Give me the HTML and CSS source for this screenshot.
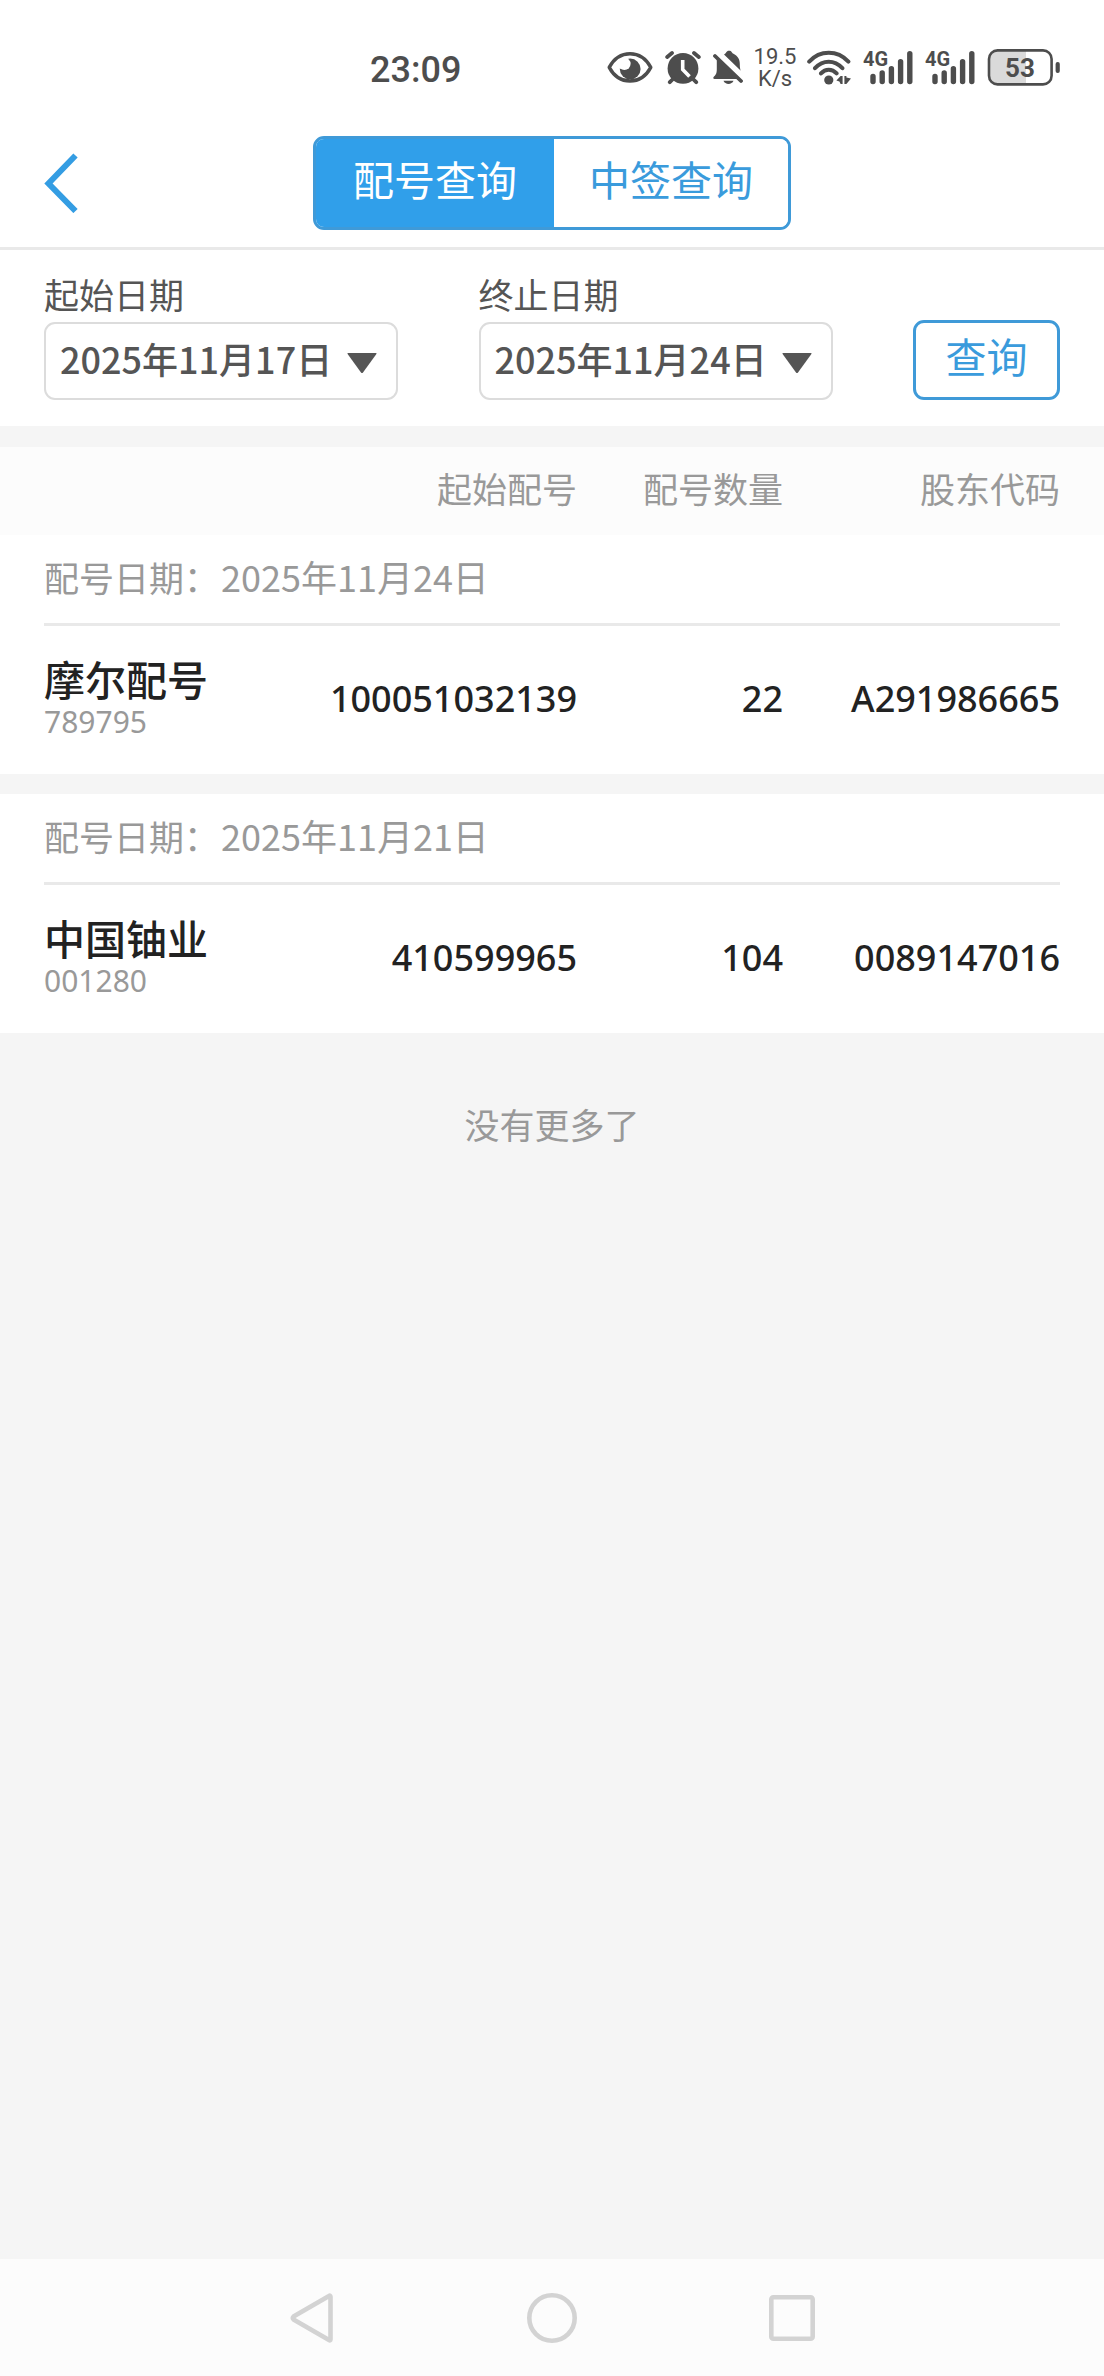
FILE: index.html
```html
<!DOCTYPE html>
<html lang="zh-CN">
<head>
<meta charset="utf-8">
<meta name="viewport" content="width=device-width">
<title>配号查询</title>
<link rel="stylesheet" href="styles.css">
</head>
<body>
<div class="page">
  <div class="status">
    <span class="clock">23:09</span>
    <div class="status-icons">
      <svg width="46" height="40" viewBox="0 0 46 40" aria-hidden="true">
        <path class="line" stroke-width="3.4" stroke-linejoin="round" d="M2.2 19.4C12 1.2 34 1.2 43.8 19.4C34 37.6 12 37.6 2.2 19.4Z"/>
        <circle class="solid" cx="23.2" cy="21" r="10.4"/>
        <circle class="hole" cx="17.4" cy="15.8" r="6.2"/>
      </svg>
      <svg width="36" height="40" viewBox="0 0 36 40" aria-hidden="true">
        <circle class="solid" cx="18" cy="20.4" r="15.4"/>
        <path class="line" stroke-width="3.8" stroke-linecap="round" d="M2.2 9L7 5M29 5L33.8 9M4.8 34.2L8.5 30.5M31.2 34.2L27.5 30.5"/>
        <path class="cut" stroke-width="3.6" d="M17.7 12V21.5L24.5 28.5"/>
      </svg>
      <svg width="30" height="40" viewBox="0 0 30 40" aria-hidden="true">
        <path class="solid" d="M3.8 10.5L24.5 30.9H1.5C0 30.9 0 29.2 1 28.4C3.6 26.5 3.8 24 3.8 20Z"/>
        <path class="solid" d="M11 6.6C13.4 5.6 13 2.8 16 2.8C19 2.8 18.8 5 20 5.6C25 8 26.8 11.5 26.8 16C26.8 19 27 21 27.8 22.8Z"/>
        <path class="line" stroke-width="3.8" stroke-linecap="round" d="M2 8L28 33"/>
        <path class="solid" d="M10.5 32.8H20.5C19 37 12 37 10.5 32.8Z"/>
      </svg>
      <div class="speed"><span>19.5</span><span>K/s</span></div>
      <svg width="44" height="40" viewBox="0 0 44 40" aria-hidden="true">
        <path class="line" stroke-width="4" stroke-linecap="round" d="M2.2 13.6C13 1.8 30.4 1.8 41.4 13.6M8 20.2C16 11.6 27.4 11.6 35.4 20.2M14 25.4C18.4 20.4 25 20.4 29.6 25.4"/>
        <circle class="solid" cx="21.8" cy="32" r="4.6"/>
        <path class="solid" d="M29.4 32.6L33.6 28V36L32.4 33.6ZM33.6 28H35.6V36H33.6ZM37.4 28H39.4V36H37.4ZM39.4 29.6L44 30.6L39.4 36Z"/>
      </svg>
      <svg width="50" height="40" viewBox="0 0 50 40">
        <text class="net" x="0" y="18">4G</text>
        <path class="line" stroke-width="5.4" stroke-linecap="round" d="M10 28.4V33.6M19.2 25V33.6M28.4 20.6V33.6M37.6 13.6V33.6M46.8 5.6V33.6"/>
      </svg>
      <svg width="50" height="40" viewBox="0 0 50 40">
        <text class="net" x="0" y="18">4G</text>
        <path class="line" stroke-width="5.4" stroke-linecap="round" d="M10 28.4V33.6M19.2 25V33.6M28.4 20.6V33.6M37.6 13.6V33.6M46.8 5.6V33.6"/>
      </svg>
      <svg width="73" height="40" viewBox="0 0 73 40">
        <path fill="#dadada" d="M10 2.4H39V36.4H10Q2 36.4 2 28.4V10.4Q2 2.4 10 2.4Z"/>
        <rect class="line" stroke-width="2.6" x="2" y="2.4" width="62.6" height="34" rx="8.6"/>
        <rect class="solid" x="68.6" y="14" width="4.2" height="11" rx="2"/>
        <text class="level" x="33" y="29" text-anchor="middle">53</text>
      </svg>
    </div>
  </div>

  <header class="header">
    <button class="back" type="button" aria-label="返回">
      <svg width="34" height="60" viewBox="0 0 34 60"><path d="M31.5 2.5L4.5 30.5L31.5 58" fill="none" stroke="#349de3" stroke-width="6"/></svg>
    </button>
    <div class="tabs">
      <button class="tab tab-active" type="button">配号查询</button>
      <button class="tab" type="button">中签查询</button>
    </div>
  </header>

  <form class="filter">
    <div class="field">
      <label for="start">起始日期</label>
      <div class="picker">
        <select id="start"><option>2025年11月17日</option></select>
        <svg class="caret" width="30" height="20" viewBox="0 0 30 20" aria-hidden="true"><path d="M1 0H29Q30 0 29.4 1L16 19.4Q15 20.4 14 19.4L.6 1Q0 0 1 0Z" fill="#555"/></svg>
      </div>
    </div>
    <div class="field">
      <label for="end">终止日期</label>
      <div class="picker">
        <select id="end"><option>2025年11月24日</option></select>
        <svg class="caret" width="30" height="20" viewBox="0 0 30 20" aria-hidden="true"><path d="M1 0H29Q30 0 29.4 1L16 19.4Q15 20.4 14 19.4L.6 1Q0 0 1 0Z" fill="#555"/></svg>
      </div>
    </div>
    <button class="search" type="button">查询</button>
  </form>

  <table class="list">
    <colgroup><col><col class="col-start"><col class="col-count"><col class="col-holder"></colgroup>
    <thead>
      <tr><td></td><th scope="col">起始配号</th><th scope="col">配号数量</th><th scope="col">股东代码</th></tr>
    </thead>
    <tbody>
      <tr><th class="group" colspan="4" scope="rowgroup"><div class="group-line"><span>配号日期：</span><span class="date">2025年11月24日</span></div></th></tr>
      <tr class="entry">
        <td class="stock"><div class="name">摩尔配号</div><div class="code">789795</div></td>
        <td>100051032139</td><td>22</td><td>A291986665</td>
      </tr>
    </tbody>
    <tbody>
      <tr><th class="group" colspan="4" scope="rowgroup"><div class="group-line"><span>配号日期：</span><span class="date">2025年11月21日</span></div></th></tr>
      <tr class="entry">
        <td class="stock"><div class="name">中国铀业</div><div class="code">001280</div></td>
        <td>410599965</td><td>104</td><td>0089147016</td>
      </tr>
    </tbody>
  </table>
  <p class="end">没有更多了</p>

  <nav class="navbar">
    <button type="button" aria-label="返回上一页"><svg width="52" height="52" viewBox="0 0 52 52"><path d="M44.5 4.8V47.2Q44.5 49 43 48L7.5 27.4Q6 26 7.5 24.6L43 4Q44.5 3 44.5 4.8Z"/></svg></button>
    <button type="button" aria-label="主屏幕"><svg width="52" height="52" viewBox="0 0 52 52"><circle cx="26" cy="26" r="22.7"/></svg></button>
    <button type="button" aria-label="最近任务"><svg width="52" height="52" viewBox="0 0 52 52"><rect x="5.3" y="5.3" width="41.4" height="41.4" rx="2"/></svg></button>
  </nav>
</div>
</body>
</html>
```
FILE: styles.css
```css
* { box-sizing: border-box; }

body {
  margin: 0;
  background: #f5f5f5;
  color: #555;
  font-family: "Noto Sans", "Noto Sans CJK SC", sans-serif;
  font-size: 35px;
}

button, select { font: inherit; margin: 0; }
svg { display: block; flex: none; }

.page {
  display: flex;
  flex-direction: column;
  min-height: 100vh;
}

/* System status bar */
.status {
  display: flex;
  justify-content: space-between;
  align-items: center;
  padding: 46px 44px 29px 370px;
  background: #fff;
  color: #4d4d4d;
}
.clock {
  padding-top: 4px;
  font: 500 36px/40px Roboto, sans-serif;
  white-space: nowrap;
}
.status-icons { display: flex; align-items: center; gap: 12px; }
.line { fill: none; stroke: #4d4d4d; }
.solid { fill: #4d4d4d; }
.hole { fill: #fff; }
.cut { fill: none; stroke: #fff; }
.speed {
  display: flex;
  flex-direction: column;
  align-items: center;
  width: 40px;
  font: 22px/22px Roboto, sans-serif;
  white-space: nowrap;
}
.net { font: bold 20px Roboto, sans-serif; fill: #4d4d4d; }
.level { font: bold 26px Roboto, sans-serif; fill: #4d4d4d; }

/* Title bar */
.header {
  display: grid;
  grid-template-columns: 1fr 478px 1fr;
  align-items: center;
  height: 131px;
  padding: 0 44px;
  background: #fff;
  border-bottom: 3px solid #e9e9e9;
}
.back {
  justify-self: start;
  padding: 0;
  border: 0;
  background: none;
}
.tabs {
  display: grid;
  grid-template-columns: 238fr 234fr;
  height: 94px;
  border: 3px solid #3f9ad8;
  border-radius: 11px;
  overflow: hidden;
}
.tab {
  padding: 0 0 10px;
  border: 0;
  background: #fff;
  color: #3a9bdc;
  font-size: 41px;
}
.tab-active { background: #309fea; color: #fff; }

/* Date filter */
.filter {
  display: flex;
  justify-content: space-between;
  align-items: flex-end;
  padding: 20px 44px 26px;
  background: #fff;
}
.field { display: flex; flex-direction: column; width: 354px; }
.field label { line-height: 52px; }
.picker { position: relative; }
.picker select {
  display: block;
  width: 100%;
  height: 78px;
  padding: 0 60px 6px 14px;
  border: 2px solid #dcdcdc;
  border-radius: 11px;
  background: #fff;
  color: #555;
  font-family: "Noto Sans CJK SC", sans-serif;
  font-size: 36px;
  font-weight: 500;
  appearance: none;
}
.caret {
  position: absolute;
  top: 31px;
  right: 21px;
  pointer-events: none;
}
.search {
  width: 147px;
  height: 80px;
  padding: 0 0 10px;
  border: 3px solid #3f9ad8;
  border-radius: 11px;
  background: #fff;
  color: #3a9bdc;
  font-size: 41px;
}

/* Allotment list */
.list {
  width: 100%;
  margin-top: 21px;
  table-layout: fixed;
  border-spacing: 0;
  background: #fff;
  text-align: right;
}
.col-start { width: 280px; }
.col-count { width: 206px; }
.col-holder { width: 321px; }
.list th, .list td { padding: 0; font-weight: 400; text-align: right; }
.list tr > :last-child { padding-right: 44px; }
.list thead th, .list thead td {
  height: 88px;
  padding-bottom: 8px;
  background: #fcfcfc;
  color: #999;
}
.list .group { padding: 0 44px; text-align: left; color: #999; }
.list tbody + tbody .group { border-top: 20px solid #f5f5f5; }
.group-line {
  display: flex;
  align-items: baseline;
  gap: 2px;
  height: 91px;
  border-bottom: 3px solid #e9e9e9;
  line-height: 82px;
}
.date { font-family: "Noto Sans CJK SC", sans-serif; font-size: 36px; }
.list .entry td {
  height: 148px;
  padding-bottom: 4px;
  color: #222;
  font-size: 36px;
  font-weight: 500;
}
.list .entry .stock { padding-bottom: 0; padding-left: 44px; text-align: left; }
.list .name { font-size: 41px; line-height: 44px; }
.list .code { color: #999; font-size: 30px; font-weight: 400; line-height: 40px; }
.end { margin: 67px 0; color: #999; line-height: 52px; text-align: center; }

/* System navigation */
.navbar {
  display: flex;
  justify-content: center;
  height: 117px;
  margin-top: auto;
  background: #fcfcfc;
}
.navbar button {
  display: flex;
  justify-content: center;
  align-items: center;
  width: 240px;
  padding: 0;
  border: 0;
  background: none;
}
.navbar svg { fill: none; stroke: #d3d3d3; stroke-width: 4.6; stroke-linejoin: round; }
```
